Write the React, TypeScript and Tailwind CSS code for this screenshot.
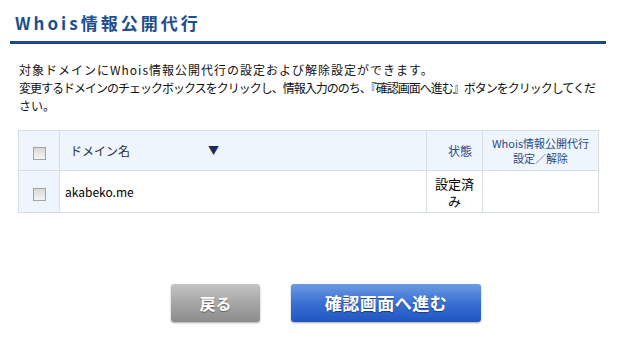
import type { FC } from "react";

const jp = { fontFamily: '"Noto Sans CJK JP", "Noto Sans", sans-serif' };

// small grey checkbox used in the table
const Box: FC = () => (
  <span className="inline-block w-[13px] h-[13px] border border-[#a3a3a3] bg-gradient-to-b from-[#d9d9d9] to-[#f4f4f4] align-middle" />
);

const App: FC = () => {
  return (
    <div className="w-[644px] h-[353px] bg-white text-black overflow-hidden" style={jp}>
      {/* Title */}
      <div className="pt-[12px] pl-[15px]">
        <h1 className="text-[17px] leading-[21px] font-bold tracking-[3px] text-[#1b4e8e]">
          Whois情報公開代行
        </h1>
      </div>
      <div className="ml-[10px] mt-[8px] w-[596px] h-[3px] bg-[#1b4a88]" />

      {/* Description */}
      <div className="mt-[17px] pl-[19px] text-[12px] leading-[18px] text-[#111]">
        <p className="whitespace-nowrap tracking-[1px]">
          対象ドメインにWhois情報公開代行の設定および解除設定ができます。
        </p>
        <p className="whitespace-nowrap tracking-[-1px]">
          変更するドメインのチェックボックスをクリックし、情報入力ののち、『確認画面へ進む』ボタンをクリックしてくだ
        </p>
        <p className="whitespace-nowrap">さい。</p>
      </div>

      {/* Domain table */}
      <table className="mt-[15px] ml-[18px] w-[580px] table-fixed border-collapse">
        <colgroup>
          <col className="w-[41px]" />
          <col className="w-[367px]" />
          <col className="w-[56px]" />
          <col className="w-[116px]" />
        </colgroup>
        <thead>
          <tr className="h-[40px] bg-[#eef5fc]">
            <th className="border border-[#d6dde5] text-center">
              <Box />
            </th>
            <th className="border border-[#d6dde5] pl-[10px] text-left font-normal">
              <div className="flex items-center text-[12px] text-[#1f2c4c]">
                <span className="w-[138px]">ドメイン名</span>
                <span className="text-[11px] text-[#1a2b58]">▼</span>
              </div>
            </th>
            <th className="border border-[#d6dde5] pr-[10px] text-right font-normal text-[12px] text-[#2f4a84]">
              状態
            </th>
            <th className="border border-[#d6dde5] text-center font-normal text-[11px] leading-[15px] text-[#2f4a84]">
              <div>Whois情報公開代行</div>
              <div>設定／解除</div>
            </th>
          </tr>
        </thead>
        <tbody>
          <tr className="h-[42px]">
            <td className="border border-[#d6dde5] bg-[#eef5fc] text-center">
              <Box />
            </td>
            <td className="border border-[#d6dde5] pl-[5px] text-[12px]">akabeko.me</td>
            <td className="border border-[#d6dde5] px-[4px] text-center text-[13px] leading-[17px]">
              設定済み
            </td>
            <td className="border border-[#d6dde5]" />
          </tr>
        </tbody>
      </table>

      {/* Buttons */}
      <div className="mt-[71px] ml-[171px] flex gap-[31px]">
        <button className="w-[89px] h-[38px] rounded-[3px] bg-gradient-to-b from-[#c4c4c4] via-[#a6a6a6] to-[#8c8c8c] text-white font-bold text-[16px] shadow-[0_1px_2px_rgba(0,0,0,0.35)] [text-shadow:0_1px_1px_rgba(0,0,0,0.4)]">
          戻る
        </button>
        <button className="w-[190px] h-[38px] rounded-[3px] bg-gradient-to-b from-[#6b9be2] via-[#3a70d3] to-[#1f55c0] text-white font-bold text-[17px] tracking-[0.5px] shadow-[0_1px_2px_rgba(0,0,0,0.35)] [text-shadow:0_1px_1px_rgba(0,0,0,0.4)]">
          確認画面へ進む
        </button>
      </div>
    </div>
  );
};

export default App;
